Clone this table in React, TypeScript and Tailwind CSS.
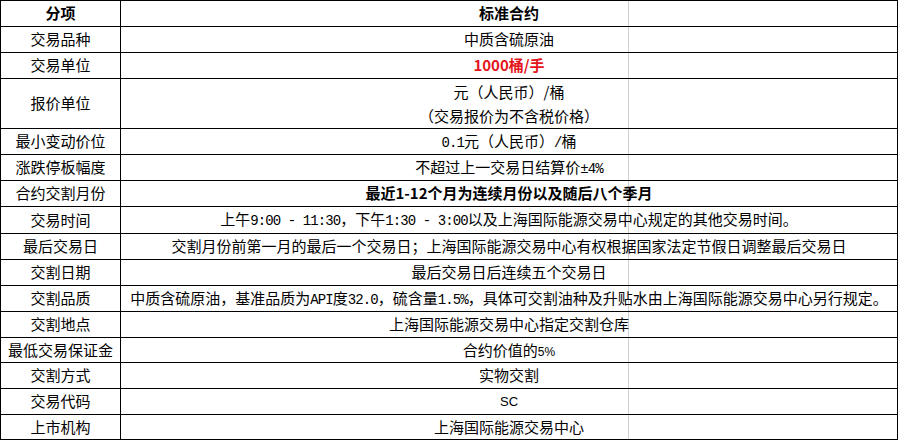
import React from "react";

function Mixed({ text }: { text: string }) {
  const parts = text.split(/([\x20-\x7e±]+)/);
  return (
    <span>
      {parts.map((p, i) =>
        /^[\x20-\x7e±]+$/.test(p) ? (
          <span
            key={i}
            className="font-['Liberation_Mono',monospace] text-[14px] tracking-[-0.9px] whitespace-pre"
          >
            {p}
          </span>
        ) : (
          <span key={i}>{p}</span>
        )
      )}
    </span>
  );
}

type Row = {
  k: string;
  v: React.ReactNode;
  h: string;
};

const rows: Row[] = [
  { k: "交易品种", v: "中质含硫原油", h: "h-[26px]" },
  {
    k: "交易单位",
    v: <span className="font-bold text-[#e3161c]">1000桶/手</span>,
    h: "h-[26px]",
  },
  {
    k: "报价单位",
    v: (
      <div className="flex flex-col items-center leading-[24px]">
        <span>元（人民币）/桶</span>
        <span>（交易报价为不含税价格）</span>
      </div>
    ),
    h: "h-[50px]",
  },
  { k: "最小变动价位", v: <Mixed text="0.1元（人民币）/桶" />, h: "h-[26px]" },
  { k: "涨跌停板幅度", v: <Mixed text="不超过上一交易日结算价±4%" />, h: "h-[26px]" },
  {
    k: "合约交割月份",
    v: <span className="font-bold">最近1-12个月为连续月份以及随后八个季月</span>,
    h: "h-[26px]",
  },
  {
    k: "交易时间",
    v: <Mixed text="上午9:00 - 11:30，下午1:30 - 3:00以及上海国际能源交易中心规定的其他交易时间。" />,
    h: "h-[27px]",
  },
  {
    k: "最后交易日",
    v: "交割月份前第一月的最后一个交易日；上海国际能源交易中心有权根据国家法定节假日调整最后交易日",
    h: "h-[26px]",
  },
  { k: "交割日期", v: "最后交易日后连续五个交易日", h: "h-[26px]" },
  {
    k: "交割品质",
    v: <Mixed text="中质含硫原油，基准品质为API度32.0，硫含量1.5%，具体可交割油种及升贴水由上海国际能源交易中心另行规定。" />,
    h: "h-[26px]",
  },
  { k: "交割地点", v: "上海国际能源交易中心指定交割仓库", h: "h-[26px]" },
  {
    k: "最低交易保证金",
    v: (
      <span>
        合约价值的
        <span className="font-['Liberation_Sans',sans-serif] text-[12px]">5%</span>
      </span>
    ),
    h: "h-[25px]",
  },
  { k: "交割方式", v: "实物交割", h: "h-[26px]" },
  {
    k: "交易代码",
    v: <span className="font-['Liberation_Sans',sans-serif] text-[13px]">SC</span>,
    h: "h-[26px]",
  },
  { k: "上市机构", v: "上海国际能源交易中心", h: "h-[25px]" },
];

export default function App() {
  return (
    <div className="bg-white w-[899px] h-[441px] font-['Noto_Sans_CJK_SC','Noto_Sans',sans-serif] text-[15px] text-black">
      <div className="relative w-[898px]">
        <div className="absolute left-[628px] top-0 w-px h-[440px] bg-[#cfcfcf] z-0" />
        <div className="relative z-10 grid grid-cols-[120px_777px] border-l border-t border-black">
          <div className="h-[26px] border-r border-b border-black flex items-center justify-center font-bold">
            分项
          </div>
          <div className="h-[26px] border-r border-b border-black flex items-center justify-center font-bold">
            标准合约
          </div>
          {rows.map((r) => (
            <React.Fragment key={r.k}>
              <div
                className={`${r.h} border-r border-b border-black flex items-center justify-center whitespace-nowrap`}
              >
                {r.k}
              </div>
              <div
                className={`${r.h} border-r border-b border-black flex items-center justify-center whitespace-nowrap`}
              >
                {r.v}
              </div>
            </React.Fragment>
          ))}
        </div>
      </div>
    </div>
  );
}
